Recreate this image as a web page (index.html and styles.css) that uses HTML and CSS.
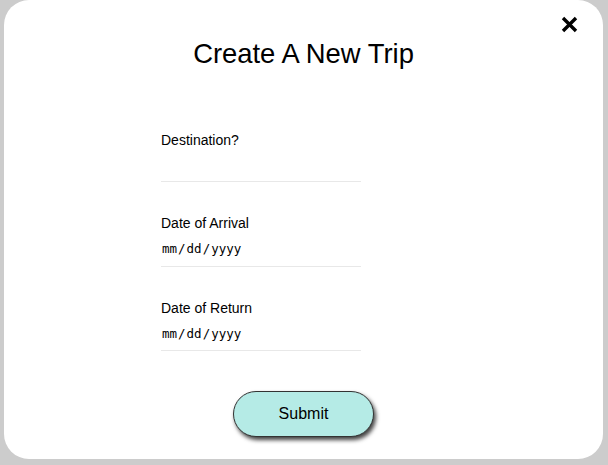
FILE: index.html
```html
<!DOCTYPE html>
<html>
<head>
<meta charset="utf-8">
<link rel="stylesheet" href="styles.css">
</head>
<body>
<div class="page">
  <div class="modal">
    <button class="close" aria-label="Close">
      <svg width="17" height="17" viewBox="0 0 17 17"><path d="M2 2 L15 15 M15 2 L2 15" stroke="#000" stroke-width="3.4" stroke-linecap="butt" fill="none"/></svg>
    </button>
    <h1 class="title">Create A New Trip</h1>
    <form class="form">
      <div class="field">
        <label class="label">Destination?</label>
        <input class="input text-input" type="text">
      </div>
      <div class="field">
        <label class="label">Date of Arrival</label>
        <input class="input date-input" type="date">
      </div>
      <div class="field">
        <label class="label">Date of Return</label>
        <input class="input date-input date-last" type="date">
      </div>
    </form>
    <div class="actions">
      <button class="submit" type="button">Submit</button>
    </div>
  </div>
</div>
</body>
</html>
```
FILE: styles.css
```css
html, body {
  margin: 0;
  padding: 0;
}
body {
  background: #cccccc;
  font-family: "Liberation Sans", Arial, sans-serif;
  color: #000;
}
.page {
  height: 465px;
  box-sizing: border-box;
  padding: 0 5px 6px 4px;
}
.modal {
  position: relative;
  background: #ffffff;
  border-radius: 25px;
  height: 459px;
  display: flex;
  flex-direction: column;
}
.close {
  position: absolute;
  top: 16px;
  right: 25px;
  width: 17px;
  height: 17px;
  padding: 0;
  border: none;
  background: none;
  display: block;
}
.close svg {
  display: block;
}
.title {
  margin: 38px 0 0 0;
  font-size: 27.4px;
  font-weight: normal;
  line-height: 31px;
  text-align: center;
}
.form {
  margin: 63px 0 0 157px;
  width: 200px;
}
.field {
  margin-bottom: 33px;
}
.field:last-child {
  margin-bottom: 0;
}
.label {
  display: block;
  font-size: 14px;
  line-height: 16px;
}
.input {
  display: block;
  width: 200px;
  box-sizing: border-box;
  border: none;
  border-bottom: 1px solid #e8e8e8;
  padding: 0;
  margin: 0;
  outline: none;
  background: transparent;
  color: #000;
  font: 12.5px "DejaVu Sans Mono", monospace;
}
.text-input {
  height: 34px;
}
.date-input {
  height: 36px;
}
.date-last {
  height: 35px;
}
.date-input::-webkit-calendar-picker-indicator {
  display: none;
}
.date-input::-webkit-datetime-edit {
  padding: 0;
}
.actions {
  display: flex;
  justify-content: center;
  margin-top: 40px;
}
.submit {
  width: 141px;
  height: 46px;
  box-sizing: border-box;
  border: 1px solid #333;
  border-radius: 23px;
  background: #b5ebe6;
  box-shadow: 2px 3px 4px rgba(0, 0, 0, 0.75);
  font-family: "Liberation Sans", Arial, sans-serif;
  font-size: 16px;
  color: #000;
  padding: 0;
}
```
